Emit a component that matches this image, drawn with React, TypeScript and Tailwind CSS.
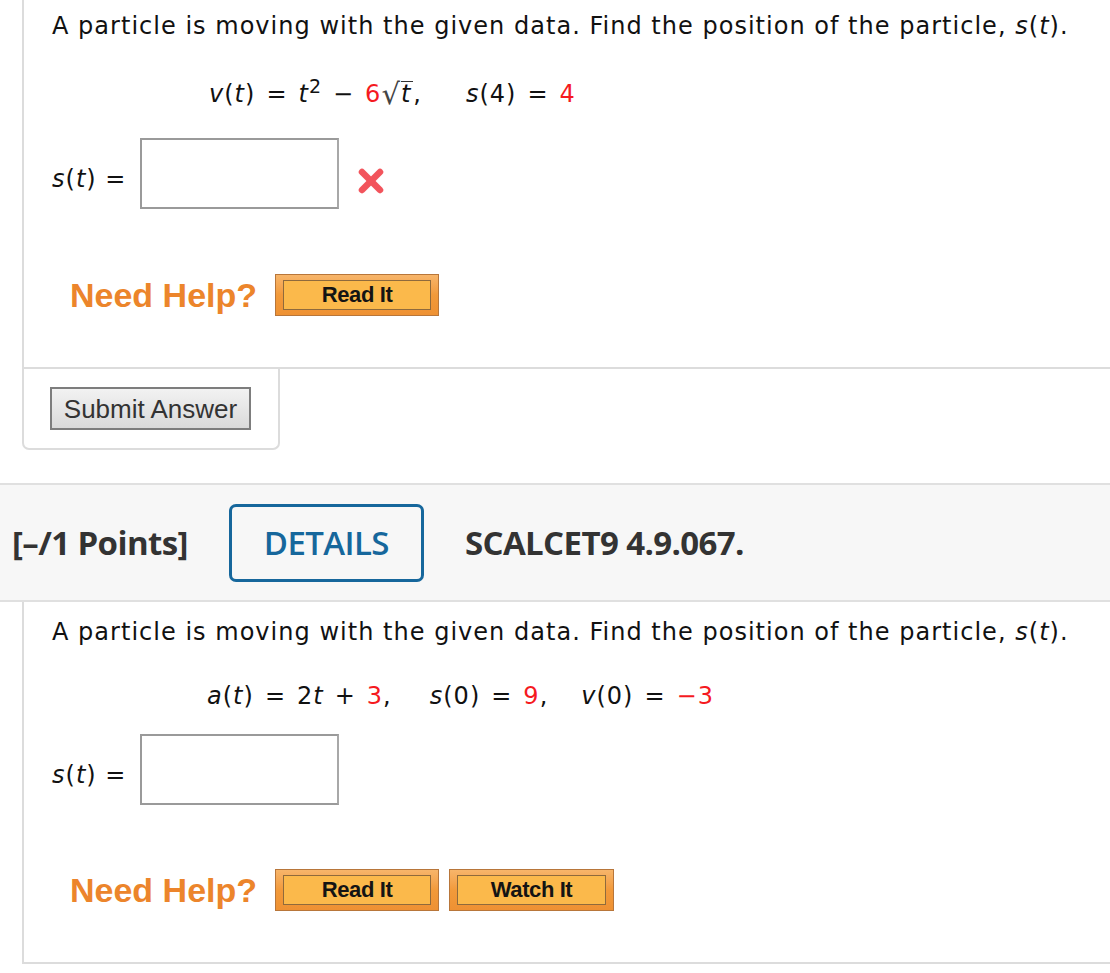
import React from "react";

const verdana = { fontFamily: '"DejaVu Sans", Verdana, sans-serif' };

function Red({ children }: { children: React.ReactNode }) {
  return <span className="text-[#f51a1f] not-italic">{children}</span>;
}

function Op({ children }: { children: React.ReactNode }) {
  return <span className="inline-block mx-[11px]">{children}</span>;
}

function HelpButton({ label, width }: { label: string; width: string }) {
  return (
    <div
      className={`${width} h-[42px] border border-[#b8763a] bg-gradient-to-b from-[#f7b56a] via-[#f29a3a] to-[#ee9133] px-[7px] py-[5px]`}
    >
      <div className="h-full w-full border border-[#8f6a3c] bg-[#fbb94b] flex items-center justify-center">
        <span
          className="text-[22px] font-bold text-[#141414] leading-none tracking-[-0.4px]"
          style={{ fontFamily: '"Liberation Sans", Arial, sans-serif' }}
        >
          {label}
        </span>
      </div>
    </div>
  );
}

function NeedHelp({ watch }: { watch?: boolean }) {
  return (
    <div className="flex items-center pl-[18px] gap-[18px]">
      <span
        className="text-[34px] font-bold text-[#ec852b] leading-none"
        style={{ fontFamily: '"Liberation Sans", Arial, sans-serif' }}
      >
        Need Help?
      </span>
      <div className="flex gap-[10px]">
        <HelpButton label="Read It" width="w-[164px]" />
        {watch && <HelpButton label="Watch It" width="w-[165px]" />}
      </div>
    </div>
  );
}

function RedX() {
  return (
    <svg width="28" height="28" viewBox="0 0 28 28" className="ml-[18px] mt-[14px]">
      <g stroke="#f2545c" strokeWidth="6.5" strokeLinecap="round">
        <line x1="5" y1="5" x2="23" y2="23" />
        <line x1="23" y1="5" x2="5" y2="23" />
      </g>
    </svg>
  );
}

function AnswerRow({ x }: { x?: boolean }) {
  return (
    <div className="flex items-center">
      <span className="text-[24px] leading-none text-[#111] pt-[10px] w-[88px] tracking-[1px]" style={verdana}>
        <i>s</i>(<i>t</i>) =
      </span>
      <div className="w-[199px] h-[71px] border-2 border-[#9a9a9a] border-r-[#a8a8a8] bg-white" />
      {x && <RedX />}
    </div>
  );
}

export default function App() {
  return (
    <div className="w-[1110px] h-[973px] bg-white overflow-hidden relative text-[#111]">
      {/* Card 1 */}
      <div className="ml-[22px] h-[369px] border-l-2 border-b-2 border-[#dcdcdc] pl-[28px] pt-[11px]">
        <p className="text-[24px] leading-[30px] whitespace-nowrap tracking-[1.02px]" style={verdana}>
          A particle is moving with the given data. Find the position of the particle, <i>s</i>(<i>t</i>).
        </p>
        <div className="mt-[38px] pl-[157px] text-[24px] leading-[30px] whitespace-nowrap tracking-[1px]" style={verdana}>
          <i>v</i>(<i>t</i>)<Op>=</Op><i>t</i>
          <sup className="text-[19px] relative top-[-9px]">2</sup>
          <Op>−</Op>
          <Red>6</Red>
          <span className="text-[#444] text-[29px] inline-block leading-[25px] relative top-[2px]">√</span>
          <span className="border-t-[1.5px] border-[#333] inline-block leading-[25px] pr-[2px]">
            <i>t</i>
          </span>
          ,<span className="inline-block w-[44px]" />
          <i>s</i>(4)<Op>=</Op>
          <Red>4</Red>
        </div>
        <div className="mt-[29px]">
          <AnswerRow x />
        </div>
        <div className="mt-[65px]">
          <NeedHelp />
        </div>
      </div>
      {/* Submit tab */}
      <div className="ml-[22px] w-[258px] h-[81px] border-l-2 border-r-2 border-b-2 border-[#dcdcdc] rounded-b-[7px] pl-[26px] pt-[18px]">
        <button
          className="w-[201px] h-[43px] border-2 border-[#7d7d7d] bg-gradient-to-b from-[#f2f2f2] to-[#dadada] text-[26px] text-[#333] leading-none"
          style={{ fontFamily: '"Liberation Sans", Arial, sans-serif' }}
        >
          Submit Answer
        </button>
      </div>
      {/* Header band */}
      <div
        className="mt-[33px] h-[119px] border-t-2 border-b-2 border-[#e0e0e0] bg-[#f7f7f7] flex items-center pl-[12px]"
        style={{ fontFamily: '"Open Sans", sans-serif' }}
      >
        <span className="text-[33px] font-bold text-[#333] tracking-[-0.6px]">[–/1 Points]</span>
        <div className="ml-[41px] w-[195px] h-[78px] border-[3px] border-[#16679c] rounded-[7px] flex items-center justify-center">
          <span className="text-[33px] font-semibold text-[#16679c] tracking-[-0.6px]">DETAILS</span>
        </div>
        <span className="ml-[41px] text-[33px] font-bold text-[#333] tracking-[-0.6px]">SCALCET9 4.9.067.</span>
      </div>
      {/* Card 2 */}
      <div className="ml-[22px] h-[362px] border-l-2 border-b-2 border-[#dcdcdc] pl-[28px] pt-[15px]">
        <p className="text-[24px] leading-[30px] whitespace-nowrap tracking-[1.02px]" style={verdana}>
          A particle is moving with the given data. Find the position of the particle, <i>s</i>(<i>t</i>).
        </p>
        <div className="mt-[34px] pl-[155px] text-[24px] leading-[30px] whitespace-nowrap tracking-[1px]" style={verdana}>
          <i>a</i>(<i>t</i>)<Op>=</Op>2<i>t</i>
          <Op>+</Op>
          <Red>3</Red>,<span className="inline-block w-[38px]" />
          <i>s</i>(0)<Op>=</Op>
          <Red>9</Red>,<span className="inline-block w-[33px]" />
          <i>v</i>(0)<Op>=</Op>
          <Red>−3</Red>
        </div>
        <div className="mt-[23px]">
          <AnswerRow />
        </div>
        <div className="mt-[64px]">
          <NeedHelp watch />
        </div>
      </div>
    </div>
  );
}
